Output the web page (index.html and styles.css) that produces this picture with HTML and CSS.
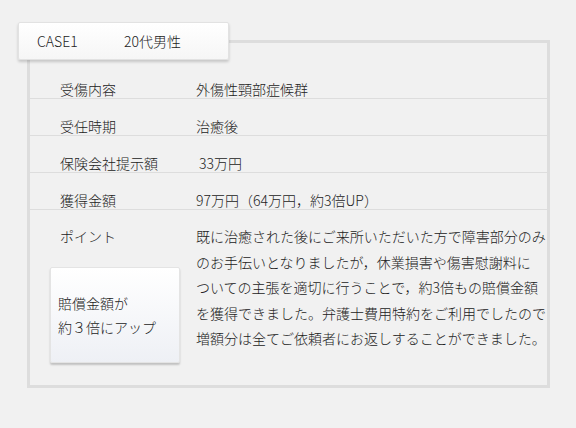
FILE: index.html
```html
<!DOCTYPE html>
<html lang="ja">
<head>
<meta charset="utf-8">
<title>CASE1</title>
<link rel="stylesheet" href="styles.css">
</head>
<body>
<div class="wrap">
  <div class="tab"><span class="case-no">CASE1</span><span class="case-who">20代男性</span></div>
  <div class="case">
    <div class="row"><div class="label">受傷内容</div><div class="value">外傷性頸部症候群</div></div>
    <div class="row"><div class="label">受任時期</div><div class="value">治癒後</div></div>
    <div class="row"><div class="label">保険会社提示額</div><div class="value">&nbsp;33万円</div></div>
    <div class="row"><div class="label">獲得金額</div><div class="value">97万円（64万円，約3倍UP）</div></div>
    <div class="row row-last">
      <div class="left">
        <div class="label-point">ポイント</div>
        <div class="badge">賠償金額が<br>約３倍にアップ</div>
      </div>
      <p class="text">既に治癒された後にご来所いただいた方で障害部分のみ<br>のお手伝いとなりましたが，休業損害や傷害慰謝料に<br>ついての主張を適切に行うことで，約3倍もの賠償金額<br>を獲得できました。弁護士費用特約をご利用でしたので<br>増額分は全てご依頼者にお返しすることができました。</p>
    </div>
  </div>
</div>
</body>
</html>
```
FILE: styles.css
```css
html, body {
  margin: 0;
  padding: 0;
}
body {
  background: #f1f1f1;
  color: #222;
  font-family: "Noto Sans CJK JP", "Noto Sans", sans-serif;
  font-size: 14px;
  font-weight: 300;
}
.wrap {
  padding: 22px 0 0 18px;
}
.tab {
  position: relative;
  z-index: 1;
  box-sizing: border-box;
  width: 211px;
  height: 38px;
  display: flex;
  align-items: center;
  padding-left: 18px;
  background: linear-gradient(#ffffff, #f6f6f6);
  border: 1px solid #e2e2e2;
  border-radius: 2px;
  box-shadow: 0 2px 3px rgba(0, 0, 0, 0.18);
  line-height: 16px;
}
.case-no {
  width: 87px;
}
.case {
  box-sizing: border-box;
  width: 523px;
  margin: -20px 0 0 9px;
  border: 3px solid #dddddd;
  padding-top: 19px;
}
.row {
  display: flex;
  padding: 19px 0 1px 30px;
  line-height: 16px;
  border-bottom: 1px solid #dddddd;
}
.label {
  width: 136px;
  flex: none;
}
.value {
  flex: 1;
}
.row-last {
  border-bottom: none;
  padding-top: 14px;
  padding-bottom: 22px;
}
.left {
  width: 136px;
  flex: none;
}
.label-point {
  line-height: 25.5px;
}
.badge {
  box-sizing: border-box;
  width: 130px;
  height: 96px;
  margin: 17px 0 0 -10px;
  padding-left: 7px;
  display: flex;
  flex-direction: column;
  justify-content: center;
  line-height: 24px;
  background: linear-gradient(#ffffff, #eef0f5);
  border: 1px solid #e4e4e4;
  border-radius: 2px;
  box-shadow: 0 2px 2px rgba(0, 0, 0, 0.2);
}
.text {
  flex: 1;
  margin: 0;
  line-height: 25.5px;
  white-space: nowrap;
}
```
